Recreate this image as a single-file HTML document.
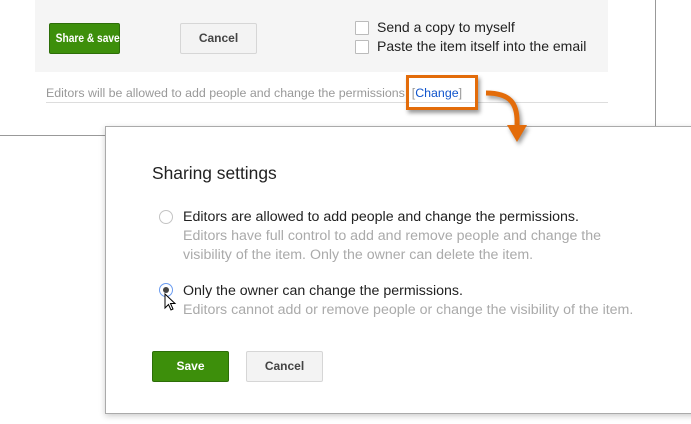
<!DOCTYPE html>
<html><head><meta charset="utf-8"><style>
body{margin:0;width:691px;height:424px;background:#fff;position:relative;overflow:hidden;font-family:"Liberation Sans",Arial,sans-serif}
.a{position:absolute}
.btn{position:absolute;box-sizing:border-box;border-radius:2px;font-weight:bold;font-size:12px;text-align:center;white-space:nowrap}
.g{background:#3d8f0b;border:1px solid #2d6e08;color:#fff}
.c{background:#f3f3f3;border:1px solid #d6d6d6;color:#444}
.cb{position:absolute;width:12px;height:12px;border:1px solid #bbb;background:#fff;border-radius:1px}
.radio{position:absolute;width:14px;height:14px;border:1px solid #c4c4c4;border-radius:50%;box-sizing:border-box;background:#fff}
</style></head><body>
<div class="a" style="left:35px;top:0;width:573px;height:72px;background:#f5f5f5"></div>
<div class="btn g" style="left:49px;top:23px;width:71px;height:31px;line-height:29px"><span style="display:inline-block;transform:scaleX(0.85)">Share &amp; save</span></div>
<div class="btn c" style="left:180px;top:23px;width:77px;height:31px;line-height:29px">Cancel</div>
<div class="cb" style="left:355px;top:21px"></div>
<div class="cb" style="left:355px;top:40px"></div>
<div class="a" style="left:377px;top:19px;font-size:14px;color:#222">Send a copy to myself</div>
<div class="a" style="left:377px;top:38px;font-size:14px;color:#222">Paste the item itself into the email</div>
<div class="a" style="left:46px;top:86px;font-size:12.4px;color:#999;white-space:nowrap">Editors will be allowed to add people and change the permissions. [<span style="color:#15c">Change</span>]</div>
<div class="a" style="left:46px;top:102px;width:562px;height:1px;background:#ddd"></div>
<div class="a" style="left:655px;top:0;width:1px;height:126px;background:#999"></div>
<div class="a" style="left:0;top:135px;width:105px;height:1px;background:#999"></div>
<div class="a" style="left:105px;top:126px;width:600px;height:288px;background:#fff;border:1px solid #aaa;box-sizing:border-box;box-shadow:0 2px 6px rgba(0,0,0,.2)"></div>
<div class="a" style="left:406px;top:75px;width:66px;height:29px;border:3px solid #e36c0a;box-shadow:2px 3px 4px rgba(0,0,0,.4)"></div>
<svg class="a" style="left:480px;top:85px" width="60" height="65">
<path d="M6 8 C30 8 38 18 37 40" fill="none" stroke="#e36c0a" stroke-width="5" filter="drop-shadow(2px 3px 2px rgba(0,0,0,.4))"/>
<path d="M27 40 L47 40 L37 57 Z" fill="#e36c0a" filter="drop-shadow(2px 3px 2px rgba(0,0,0,.4))"/>
</svg>
<div class="a" style="left:152px;top:163px;font-size:17.4px;color:#222">Sharing settings</div>
<div class="radio" style="left:159px;top:210px"></div>
<div class="a" style="left:183px;top:208px;font-size:14.2px;color:#222;line-height:19px;white-space:nowrap">Editors are allowed to add people and change the permissions.<br><span style="color:#aaa">Editors have full control to add and remove people and change the<br>visibility of the item. Only the owner can delete the item.</span></div>
<div class="radio" style="left:159px;top:283px;border-color:#6b9cf0"><div style="position:absolute;left:3px;top:3px;width:6px;height:6px;border-radius:50%;background:#444"></div></div>
<svg class="a" style="left:164px;top:293px" width="14" height="20"><path d="M1 1 L1 15 L4.5 11.5 L7 17 L9 16 L6.5 10.5 L11 10.5 Z" fill="#fff" stroke="#000" stroke-width="1"/></svg>
<div class="a" style="left:183px;top:282px;font-size:14.2px;color:#222;line-height:19px;white-space:nowrap">Only the owner can change the permissions.<br><span style="color:#aaa">Editors cannot add or remove people or change the visibility of the item.</span></div>
<div class="btn g" style="left:152px;top:351px;width:77px;height:31px;line-height:29px">Save</div>
<div class="btn c" style="left:246px;top:351px;width:77px;height:31px;line-height:29px">Cancel</div>
</body></html>
